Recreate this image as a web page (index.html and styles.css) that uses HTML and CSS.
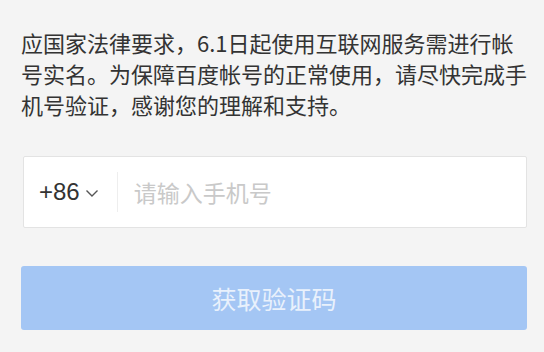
FILE: index.html
```html
<!DOCTYPE html>
<html lang="zh-CN">
<head>
    <meta charset="UTF-8">
    <meta name="viewport" content="width=device-width, initial-scale=1.0">
    <title>手机号验证</title>
    <link rel="stylesheet" href="styles.css">
</head>
<body>

<div class="page">
    <p class="notice">应国家法律要求，6.1日起使用互联网服务需进行帐号实名。为保障百度帐号的正常使用，请尽快完成手机号验证，感谢您的理解和支持。</p>

    <div class="phone-field">
        <div class="country-code">
            <span>+86</span>
            <svg class="chevron" width="14" height="9" viewBox="0 0 14 9">
                <path d="M1.5 1.5 L7 7 L12.5 1.5" fill="none" stroke="#555" stroke-width="1.4"/>
            </svg>
        </div>
        <div class="divider"></div>
        <input class="phone-input" type="tel" placeholder="请输入手机号">
    </div>

    <button class="code-button" disabled>获取验证码</button>
</div>

</body>
</html>
```

FILE: styles.css
```css
body {
    margin: 0;
    padding: 0;
    background-color: #f4f4f4;
    font-family: "Noto Sans CJK SC", "Liberation Sans", sans-serif;
    color: #333333;
}

.page {
    padding: 27px 17px 0 21px;
}

.notice {
    margin: 0;
    font-size: 22px;
    line-height: 31px;
    color: #333333;
}

.phone-field {
    display: flex;
    align-items: center;
    margin: 36px 0 0 2px;
    height: 70px;
    background-color: #ffffff;
    border: 1px solid #e3e3e3;
    border-radius: 2px;
}

.country-code {
    display: flex;
    align-items: center;
    gap: 5px;
    padding-left: 15px;
    font-family: "Liberation Sans", sans-serif;
    font-size: 24px;
    color: #333333;
}

.chevron {
    margin-top: 2px;
}

.divider {
    width: 1px;
    height: 40px;
    margin: 0 16px 0 18px;
    background-color: #eeeeee;
}

.phone-input {
    flex: 1;
    border: none;
    outline: none;
    background: transparent;
    font-family: "Noto Sans CJK SC", sans-serif;
    font-size: 23px;
    color: #333333;
    padding: 0;
}

.phone-input::placeholder {
    color: #c9c9c9;
}

.code-button {
    display: block;
    width: 506px;
    height: 64px;
    margin-top: 38px;
    border: none;
    border-radius: 3px;
    background-color: #a4c6f4;
    color: #e9f1fc;
    font-family: "Noto Sans CJK SC", sans-serif;
    font-size: 25px;
}
```
